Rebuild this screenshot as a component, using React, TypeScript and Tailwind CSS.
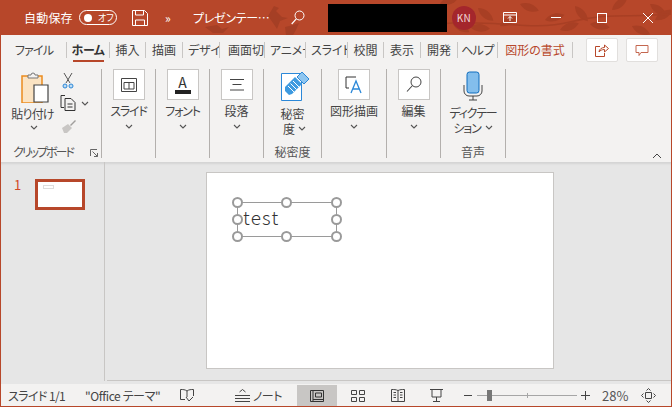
const font = `[font-family:"Noto_Sans_CJK_JP","Noto_Sans",sans-serif] [font-feature-settings:"palt"]`;

const tabs = [
  { label: "ファイル", w: "w-[65px]", cls: "text-[#444] tracking-[-0.8px]" },
  { label: "ホーム", w: "w-[43px]", cls: "font-bold text-[#333] tracking-[-0.4px]" },
  { label: "挿入", w: "w-[36px]", cls: "text-[#444]" },
  { label: "描画", w: "w-[37px]", cls: "text-[#444]" },
  { label: "デザイン", w: "w-[37px]", cls: "text-[#444] justify-start pl-[5px] tracking-[-0.2px]" },
  { label: "画面切り替え", w: "w-[45px]", cls: "text-[#444] justify-start pl-[8px]" },
  { label: "アニメーション", w: "w-[41px]", cls: "text-[#444] justify-start pl-[5px] tracking-[-0.2px]" },
  { label: "スライドショー", w: "w-[42px]", cls: "text-[#444] justify-start pl-[5px] tracking-[-0.1px]" },
  { label: "校閲", w: "w-[36px]", cls: "text-[#444]" },
  { label: "表示", w: "w-[37px]", cls: "text-[#444]" },
  { label: "開発", w: "w-[37px]", cls: "text-[#444]" },
  { label: "ヘルプ", w: "w-[40px]", cls: "text-[#444] tracking-[-0.5px]" },
  { label: "図形の書式", w: "w-[75px]", cls: "text-[#b7472a]" },
];

function Chevron({ className = "" }: { className?: string }) {
  return (
    <svg width="8" height="5" viewBox="0 0 8 5" className={className}>
      <path d="M1 1l3 3 3-3" fill="none" stroke="#555" strokeWidth="1.1" />
    </svg>
  );
}

function Group({
  w,
  label,
  labelCls = "",
  children,
}: {
  w: string;
  label?: string;
  labelCls?: string;
  children: React.ReactNode;
}) {
  return (
    <div className={`${w} relative flex flex-col items-center border-r border-[#b3b0ad] h-[89px]`}>
      <div className="flex-1 flex flex-col items-center w-full">{children}</div>
      {label && <div className={`text-[12px] leading-[14px] text-[#555] whitespace-nowrap mb-[-1px] ${labelCls}`}>{label}</div>}
    </div>
  );
}

function BoxButton({ label, kana, children }: { label: string; kana?: boolean; children: React.ReactNode }) {
  return (
    <>
      <div className="w-[32px] h-[31px] bg-white border border-[#c8c6c4] flex items-center justify-center">
        {children}
      </div>
      <div className={`text-[12px] leading-[14px] text-[#444] mt-[4px] whitespace-nowrap ${kana ? "tracking-[-1.2px]" : ""}`}>{label}</div>
      <Chevron className="mt-[6px]" />
    </>
  );
}

function TitleLeaves() {
  const leaf = "M0 0c6-5 14-5 20 0-6 5-14 5-20 0z";
  const leaves = [
    [440, 4, -20], [452, 22, 30], [478, 8, 40], [500, 26, -30], [520, 4, 20], [545, 20, -15], [575, 6, 50],
    [590, 24, 10], [612, 10, -40], [632, 26, 25], [650, 4, 35], [470, 27, 5], [560, 30, -20], [655, 20, -30],
  ];
  return (
    <svg width="672" height="35" className="absolute left-0 top-0">
      {leaves.map(([x, y, r], i) => (
        <path key={i} d={leaf} fill="#a83f24" transform={`translate(${x} ${y}) rotate(${r})`} />
      ))}
      <path d="M440 24c50-6 90 8 130-2s60-4 102-8" fill="none" stroke="#a83f24" strokeWidth="1.5" />
      <path d="M268 16l6-10 5 2-3 3 6 6 6 1-8 3-3 8-4-6z" fill="#a53f25" />
      <path d="M205 27l12-2 5 4 7-2-6 6h-10z" fill="#a53f25" />
      <path d="M285 27l8-2 6-2-3 7-3 5h-7z" fill="#a53f25" />
    </svg>
  );
}

function TitleBar() {
  return (
    <div className="relative h-[35px] bg-[#b7472a] text-white overflow-hidden shrink-0">
      <TitleLeaves />
      <div className="relative flex items-center h-full">
        <span className="ml-[24px] w-[55px] text-[12px] leading-none tracking-[0.2px]">自動保存</span>
        <div className="w-[38px] h-[15px] rounded-full border border-white flex items-center">
          <div className="ml-[4px] w-[8px] h-[8px] rounded-full bg-white" />
          <span className="ml-[6px] text-[9px] leading-none">オフ</span>
        </div>
        <svg width="16" height="16" viewBox="0 0 16 16" className="ml-[15px]">
          <path d="M.5.5h12l3 3v12H.5zM3.500 1v4h8V1M3.500 15.500V10h9v5.500" fill="none" stroke="#fff" />
        </svg>
        <span className="ml-[17px] w-[28px] text-[12px] leading-none">»</span>
        <span className="w-[98px] text-[12px] leading-none whitespace-nowrap tracking-[-0.3px]">プレゼンテー…</span>
        <svg width="14" height="15" viewBox="0 0 14 15">
          <circle cx="8.5" cy="5.5" r="4.5" fill="none" stroke="#fff" />
          <path d="M5.300 8.800L.7 14" stroke="#fff" strokeWidth="1.2" />
        </svg>
        <div className="ml-[23px] w-[119px] h-[28px] bg-black" />
        <div className="ml-[5px] w-[24px] h-[24px] rounded-full bg-[#a4262c] flex items-center justify-center text-[10px] tracking-[0.3px] text-[#f2d9d9]">
          KN
        </div>
        <svg width="14" height="11" viewBox="0 0 14 11" className="ml-[27px]">
          <path d="M.5.5h13v10H.5zM.5 3h13M7 9V4.500M5 6.500l2-2 2 2" fill="none" stroke="#fff" />
        </svg>
        <div className="ml-[34px] w-[10px] h-px bg-white" />
        <div className="ml-[36px] w-[10px] h-[10px] border border-white" />
        <svg width="10" height="10" viewBox="0 0 10 10" className="ml-[36px]">
          <path d="M0 0l10 10M10 0L0 10" stroke="#fff" />
        </svg>
      </div>
    </div>
  );
}

function TabRow() {
  return (
    <div className="h-[30px] flex items-center shrink-0 pl-px">
      {tabs.map((t) => (
        <div
          key={t.label}
          className={`${t.w} relative h-[16px] flex items-center justify-center overflow-hidden border-r border-[#c8c6c4] text-[12px] leading-none whitespace-nowrap ${t.cls}`}
        >
          {t.label}
        </div>
      ))}
      <div className="ml-[13px] w-[32px] h-[24px] bg-white border border-[#e1dfdd] rounded-[2px] flex items-center justify-center">
        <svg width="14" height="13" viewBox="0 0 14 13">
          <path d="M5 2.500H.5v10h9V9M4 8c0-3 3-4.500 5.500-4.500V1l4 3.500-4 3.500V5.500C7 5.500 5 6.500 4 8z" fill="none" stroke="#b7472a" />
        </svg>
      </div>
      <div className="ml-[8px] w-[32px] h-[24px] bg-white border border-[#e1dfdd] rounded-[2px] flex items-center justify-center">
        <svg width="14" height="13" viewBox="0 0 14 13">
          <path d="M1 1.500h12v7H6l-2 3v-3H1z" fill="none" stroke="#c4674f" />
        </svg>
      </div>
    </div>
  );
}

function Ribbon() {
  return (
    <div className="relative h-[97px] flex pt-[4px] shrink-0 pl-px">
      <Group w="w-[100px]" label="クリップボード" labelCls="self-start ml-[11px] tracking-[-2px] text-[11.5px]">
        <div className="flex w-full h-[71px]">
          <div className="w-[59px] flex flex-col items-center">
            <svg width="28" height="31" viewBox="0 0 28 31" className="mt-[3px] ml-[6px]">
              <path d="M1 4h20v27H1z" fill="#fbe3c2" stroke="#eb8c1e" strokeWidth="1.500" />
              <path d="M7 5V3h3a2 2 0 0 1 4 0h3v3H7z" fill="#f3f2f1" stroke="#777" />
              <path d="M13 13h14v17H13z" fill="#fff" stroke="#444" strokeWidth="1.200" />
            </svg>
            <div className="text-[12px] leading-[14px] text-[#444] mt-[4px] whitespace-nowrap tracking-[-0.8px] ml-[2px]">貼り付け</div>
            <Chevron className="mt-[4px] ml-[5px]" />
          </div>
          <div className="flex flex-col items-start pt-[4px]">
            <svg width="12" height="16" viewBox="0 0 12 16" className="ml-[1px]">
              <path d="M2 0l6 10M10 0L4 10" stroke="#555" />
              <circle cx="3" cy="13" r="2" fill="#bfdcf3" stroke="#2b88d8" />
              <circle cx="9" cy="13" r="2" fill="#bfdcf3" stroke="#2b88d8" />
            </svg>
            <div className="flex items-center mt-[6px]">
              <svg width="16" height="16" viewBox="0 0 16 16" className="-ml-[1px]">
                <path d="M5 .5H1v12h3M5 3.500h6l4 4v8H5zM7.500 9h5M7.500 12h5" fill="none" stroke="#333" />
              </svg>
              <Chevron className="ml-[5px]" />
            </div>
            <svg width="16" height="15" viewBox="0 0 16 15" className="mt-[8px]">
              <path d="M1 9l6-4 4 4-5 5H3z" fill="#c8c6c4" />
              <path d="M9 6l5-5 1 1-5 5z" fill="#a19f9d" />
            </svg>
          </div>
        </div>
        <svg width="8" height="8" viewBox="0 0 8 8" className="absolute right-[3px] bottom-[1px]">
          <path d="M.5 7V.5H7M2.500 2.500l5 5M7.500 4v3.500H4" fill="none" stroke="#666" />
        </svg>
      </Group>
      <Group w="w-[54px]">
        <BoxButton label="スライド" kana>
          <svg width="16" height="14" viewBox="0 0 16 14">
            <path d="M.5.500h15v13H.5zM3 4.500h10M3 4.500v6.500h10V4.500M8 4.500v6.500" fill="none" stroke="#444" />
          </svg>
        </BoxButton>
      </Group>
      <Group w="w-[54px]">
        <BoxButton label="フォント" kana>
          <div className="flex flex-col items-center">
            <span className="text-[14px] leading-[13px] text-[#333]">A</span>
            <div className="w-[16px] h-[4px] bg-[#222] mt-[1px]" />
          </div>
        </BoxButton>
      </Group>
      <Group w="w-[54px]">
        <BoxButton label="段落">
          <svg width="14" height="12" viewBox="0 0 14 12">
            <path d="M0 .500h14M2.500 5.500h9M0 11h14" stroke="#444" />
          </svg>
        </BoxButton>
      </Group>
      <Group w="w-[58px]" label="秘密度">
        <svg width="28" height="29" viewBox="0 0 28 29" className="mt-[3px] ml-[5px]">
          <path d="M.5 1.500h20v27H.5z" fill="#fff" stroke="#2b88d8" />
          <path d="M4 15L14 5l7 7-10 10-3 1-4-4z" fill="#3d9ae0" />
          <path d="M7 14l6 6M9.500 11.500l6 6M12 9l6 6" stroke="#fff" strokeWidth="1" />
          <path d="M16 5l5-5 7 7-5 5z" fill="#8ec6f0" stroke="#2b88d8" />
        </svg>
        <div className="text-[12px] leading-[15px] text-[#444] mt-[5px]">秘密</div>
        <div className="flex items-center gap-[3px] text-[12px] leading-[15px] text-[#444] ml-[4px]">
          度<Chevron />
        </div>
      </Group>
      <Group w="w-[65px]">
        <BoxButton label="図形描画">
          <svg width="18" height="18" viewBox="0 0 18 18">
            <path d="M11 1H1v11h3" fill="none" stroke="#333" />
            <path d="M6 17L11 5l5 12M8 13h6" fill="none" stroke="#2b88d8" strokeWidth="1.300" />
          </svg>
        </BoxButton>
      </Group>
      <Group w="w-[54px]">
        <BoxButton label="編集">
          <svg width="16" height="17" viewBox="0 0 16 17">
            <circle cx="10" cy="6" r="5" fill="none" stroke="#444" />
            <path d="M6.500 9.500L1 15.500" stroke="#444" strokeWidth="1.100" />
          </svg>
        </BoxButton>
      </Group>
      <Group w="w-[65px]" label="音声">
        <svg width="20" height="30" viewBox="0 0 20 30" className="mt-[2px]">
          <rect x="4" y="1" width="12" height="21" rx="2.500" fill="#83beec" stroke="#0f6cbd" />
          <path d="M1 14v6a5 5 0 0 0 5 5h8a5 5 0 0 0 5-5v-6M10 25v4M6 29h8" fill="none" stroke="#444" />
        </svg>
        <div className="text-[12px] leading-[15px] text-[#444] mt-[4px] whitespace-nowrap tracking-[-1.2px]">ディクテー</div>
        <div className="flex items-center gap-[4px] text-[12px] leading-[15px] text-[#444] whitespace-nowrap tracking-[-1.2px]">
          ション<Chevron />
        </div>
      </Group>
      <svg width="10" height="6" viewBox="0 0 10 6" className="absolute right-[9px] bottom-[3px]">
        <path d="M1 5l4-4 4 4" fill="none" stroke="#444" />
      </svg>
    </div>
  );
}

function Handle({ x, y }: { x: string; y: string }) {
  return <div className={`absolute ${x} ${y} w-[11px] h-[11px] rounded-full bg-white border-2 border-[#9a9a9a]`} />;
}

function Stage() {
  return (
    <div className="flex-1 flex min-h-0 bg-[#e6e6e6] shadow-[inset_0_3px_2px_-1px_#d4d4d4]">
      <div className="w-[104px] h-[219px] border-r border-[#c8c6c4] flex shrink-0 pt-[16px] pl-[13px]">
        <span className="text-[13px] leading-none text-[#d24726] w-[21px]">1</span>
        <div className="w-[50px] h-[31px] border-[3px] border-[#b7472a] bg-white relative mt-px">
          <div className="absolute left-[5px] top-[3px] w-[11px] h-[4px] border border-[#ddd]" />
        </div>
      </div>
      <div className="flex-1 h-[219px] ml-[2px] pl-[99px] pt-[10px] border-b border-[#c8c6c4]">
        <div className="relative w-[348px] h-[197px] bg-white border border-[#c8c6c4]">
          <div className="absolute left-[30px] top-[29px] w-[100px] h-[35px] border border-[#9a9a9a]" />
          <span className="absolute left-[36px] top-[30px] text-[19px] leading-[28px] font-light tracking-[1.2px] text-[#333]">test</span>
          <Handle x="left-[25px]" y="top-[24px]" />
          <Handle x="left-[74px]" y="top-[24px]" />
          <Handle x="left-[124px]" y="top-[24px]" />
          <Handle x="left-[25px]" y="top-[41px]" />
          <Handle x="left-[124px]" y="top-[41px]" />
          <Handle x="left-[25px]" y="top-[58px]" />
          <Handle x="left-[74px]" y="top-[58px]" />
          <Handle x="left-[124px]" y="top-[58px]" />
        </div>
      </div>
    </div>
  );
}

function StatusBar() {
  return (
    <div className="h-[22px] bg-[#f3f2f1] flex items-center text-[12px] text-[#444] leading-none whitespace-nowrap shrink-0 border-t border-[#f3f2f1]">
      <span className="ml-[7px] w-[77px] tracking-[-0.6px]">スライド 1/1</span>
      <span className="w-[95px] tracking-[-0.4px]">"Office テーマ"</span>
      <svg width="14" height="13" viewBox="0 0 14 13">
        <path d="M7 2C5 .5 3 .5.500.500v10H5M7 2c2-1.500 4-1.500 6.500-1.500V7M7 2v6M6 8l3 4 4-4" fill="none" stroke="#444" />
      </svg>
      <svg width="15" height="14" viewBox="0 0 15 14" className="ml-[41px]">
        <path d="M0 6.500h15M0 9.500h15M0 12.500h15M4.500 3l3-2.500 3 2.500" fill="none" stroke="#444" />
      </svg>
      <span className="ml-[3px] w-[44px] tracking-[-0.5px]">ノート</span>
      <div className="w-[40px] h-full bg-[#c8c6c4] flex items-center justify-center">
        <svg width="14" height="12" viewBox="0 0 14 12">
          <path d="M.5.500h13v11H.5zM3 .500v11M5.500 3h6v4h-6zM3 9.500h10.500" fill="none" stroke="#333" />
        </svg>
      </div>
      <svg width="14" height="12" viewBox="0 0 14 12" className="ml-[14px]">
        <path d="M.5.500h5v4h-5zM8.500.500h5v4h-5zM.5 7.500h5v4h-5zM8.500 7.500h5v4h-5z" fill="none" stroke="#444" />
      </svg>
      <svg width="14" height="13" viewBox="0 0 14 13" className="ml-[26px]">
        <path d="M7 1.500C5 .5 3 .5.500.500v12h6.500V1.500c2-1 4-1 6.500-1v12H7M2.500 3.500h2.500M2.500 6h2.500M2.500 8.500h2.500M9 3.500h2.500M9 6h2.500M9 8.500h2.500" fill="none" stroke="#444" />
      </svg>
      <svg width="13" height="13" viewBox="0 0 13 13" className="ml-[25px]">
        <path d="M0 .500h13M2 .500v7.500h9V.500M6.500 8v4M3 12.500h7" fill="none" stroke="#444" />
      </svg>
      <div className="ml-[21px] w-[8px] h-px bg-[#444]" />
      <div className="relative ml-[5px] w-[100px] h-px bg-[#a6a6a6]">
        <div className="absolute left-[10px] -top-[5px] w-[5px] h-[11px] bg-[#777]" />
        <div className="absolute left-[50px] -top-[2px] w-px h-[5px] bg-[#a6a6a6]" />
      </div>
      <svg width="9" height="9" viewBox="0 0 9 9" className="ml-[4px]">
        <path d="M0 4.500h9M4.500 0v9" stroke="#444" />
      </svg>
      <span className="ml-[12px] w-[39px] text-[13px] text-[#555]">28%</span>
      <svg width="15" height="15" viewBox="0 0 15 15">
        <path d="M4.500 4.500h6v6h-6zM5.500 2.500l2-2 2 2M5.500 12.500l2 2 2-2M2.500 5.500l-2 2 2 2M12.500 5.500l2 2-2 2" fill="none" stroke="#444" />
      </svg>
    </div>
  );
}

export default function App() {
  return (
    <div className={`${font} w-[672px] h-[407px] overflow-hidden flex flex-col bg-[#f3f2f1] border-l border-r border-b border-[#b7472a] relative`}>
      <div className="-mx-px">
        <TitleBar />
      </div>
      <TabRow />
      <div className="absolute left-[72px] top-[60px] w-[31px] h-[2px] bg-[#b7472a]" />
      <Ribbon />
      <Stage />
      <StatusBar />
    </div>
  );
}
